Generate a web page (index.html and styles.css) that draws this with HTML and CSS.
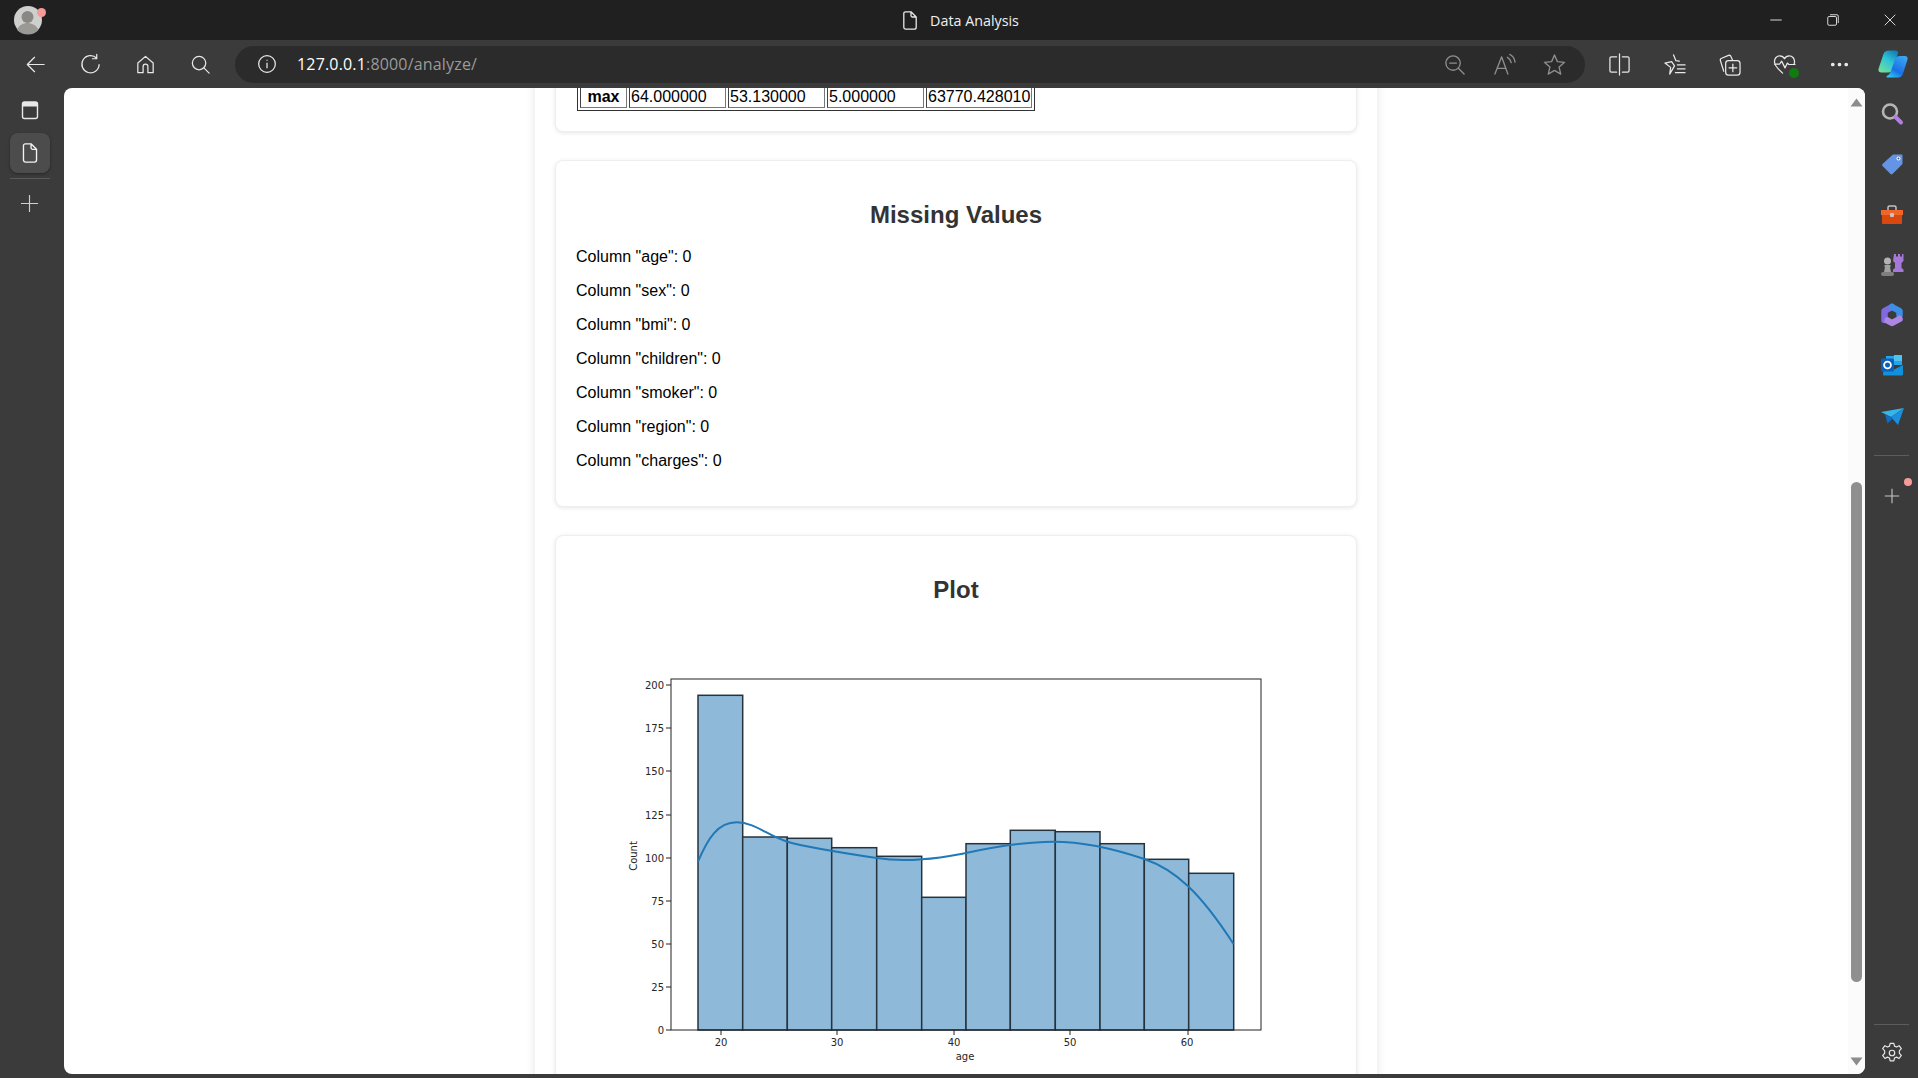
FILE: index.html
```html
<!DOCTYPE html>
<html>
<head>
	<title>Data Analysis</title>
	<link rel="stylesheet" href="styles.css">
</head>
<body>
<div class="app">

  <header class="titlebar">
    <div class="avatar-wrap">
      <svg class="avatar" viewBox="0 0 30 30">
        <circle cx="15" cy="15" r="14" fill="#cfcfcd"/>
        <circle cx="14.500" cy="12" r="6" fill="#8a8885"/>
        <path d="M4 25c2-5 6-7 10.500-7s8.500 2 11 7c-3 3-6.500 4.500-10.500 4.500S7 28 4 25z" fill="#9b9996"/>
      </svg>
      <span class="avatar-dot"></span>
    </div>
    <div class="window-title">
      <svg class="ico-doc" viewBox="0 0 14 19"><path d="M2.500 0.800h5.500L13.200 6v10.200a2 2 0 0 1-2 2H2.800a2 2 0 0 1-2-2V2.500a1.700 1.700 0 0 1 1.700-1.700z M8 0.800V4.500A1.500 1.500 0 0 0 9.500 6h3.700" fill="none" stroke="#e8e8e8" stroke-width="1.300" stroke-linejoin="round"/></svg>
      <span>Data Analysis</span>
    </div>
    <div class="window-controls">
      <div class="win-btn"><svg viewBox="0 0 16 16"><path d="M1.500 8h13" stroke="#f0f0f0" fill="none"/></svg></div>
      <div class="win-btn"><svg viewBox="0 0 16 16"><rect x="2" y="4" width="10" height="10" rx="1.500" fill="none" stroke="#f0f0f0"/><path d="M4.500 2h8a1.500 1.500 0 0 1 1.500 1.500v8" fill="none" stroke="#f0f0f0"/></svg></div>
      <div class="win-btn"><svg viewBox="0 0 16 16"><path d="M2 2l12 12M14 2L2 14" stroke="#f0f0f0" fill="none"/></svg></div>
    </div>
  </header>

  <nav class="toolbar">
    <div class="nav-btn"><svg viewBox="0 0 24 24"><path d="M21 12H3.500M11 4.500L3.500 12l7.500 7.500"/></svg></div>
    <div class="nav-btn"><svg viewBox="0 0 24 24"><path d="M18.500 5.500A9 9 0 1 0 21 12M18.500 1.500v4.500H14"/></svg></div>
    <div class="nav-btn"><svg viewBox="0 0 24 24"><path d="M4 10.500L12 3.500l8 7v10h-5.500v-6.500a2.500 2.500 0 0 0-5 0v6.500H4z"/></svg></div>
    <div class="nav-btn"><svg viewBox="0 0 24 24"><circle cx="10.500" cy="10.500" r="7"/><path d="M15.500 15.500L21 21"/></svg></div>

    <div class="address">
      <svg class="addr-info" viewBox="0 0 24 24"><circle cx="12" cy="12" r="10"/><path d="M12 10.500V17M12 7v1.200"/></svg>
      <div class="url"><span class="url-host">127.0.0.1</span>:8000/analyze/</div>
      <div class="addr-icons">
        <svg viewBox="0 0 24 24"><circle cx="10.500" cy="10.500" r="7.500"/><path d="M7 10.500h7M16 16l6 6"/></svg>
        <svg viewBox="0 0 24 24"><path d="M2 22L9 4l6.500 18M4.500 16h8.500M15 4.500c2 1 3.500 3 4 5.500M17.500 1.500c3 1.500 5 4.500 5.500 8"/></svg>
        <svg viewBox="0 0 24 24"><path d="M12 2l3 7 7.500.7-5.700 5 1.700 7.300-6.500-3.900L5.500 22l1.700-7.300-5.700-5L9 9z"/></svg>
      </div>
    </div>

    <div class="actions">
      <div class="nav-btn"><svg viewBox="0 0 24 24"><path d="M12 1v22M9 4H3.500A1.500 1.500 0 0 0 2 5.500v13A1.500 1.500 0 0 0 3.500 20H9M15 4h5.500A1.500 1.500 0 0 1 22 5.500v13a1.500 1.500 0 0 1-1.500 1.500H15"/></svg></div>
      <div class="nav-btn"><svg viewBox="0 0 24 24"><path d="M11 2l2.500 6 3.500.5M12 13.500L7 22l1-7L2 10.500l7-1.500zM15 12.500h8M15 16.500h8M13 20.500h10"/></svg></div>
      <div class="nav-btn"><svg viewBox="0 0 24 24"><path d="M6 19L2.500 8a2 2 0 0 1 1.300-2.500L11 2.500a2 2 0 0 1 2.500 1.200L15 7"/><rect x="8" y="8" width="15" height="15" rx="3"/><path d="M15.500 11.500v8M11.500 15.500h8"/></svg></div>
      <div class="nav-btn health">
        <svg viewBox="0 0 24 24"><path d="M5 16C2.500 13.500 1.500 11.500 1.500 9c0-3.500 2.500-6 5.500-6 2 0 4 1 5 3 1-2 3-3 5-3 3 0 5.500 2.500 5.500 6 0 1-.2 2-.7 3M1.500 11.500H7l2-3 3.500 7 2.500-5 1.500 1.500H23M5 16l5 5"/></svg>
        <span class="health-badge"></span>
      </div>
      <div class="nav-btn"><svg viewBox="0 0 24 24"><circle cx="5" cy="12" r="1.300" class="solid"/><circle cx="12" cy="12" r="1.300" class="solid"/><circle cx="19" cy="12" r="1.300" class="solid"/></svg></div>
      <div class="nav-btn copilot">
        <svg viewBox="0 0 30 28">
          <defs>
            <linearGradient id="cpA" x1="0.800" y1="0" x2="0.150" y2="1"><stop offset="0" stop-color="#0f7fb8"/><stop offset="0.450" stop-color="#2fc4d6"/><stop offset="1" stop-color="#74e09a"/></linearGradient>
            <linearGradient id="cpB" x1="0.800" y1="0" x2="0.200" y2="1"><stop offset="0" stop-color="#3ba6f2"/><stop offset="0.650" stop-color="#1a6fe6"/><stop offset="1" stop-color="#2cc6f0"/></linearGradient>
          </defs>
          <path d="M11 0.500h6c2.500 0 3.500 1 3 3L14 20c-.6 1.700-1.700 2.500-3.500 2.500H3.500C1 22.500 0 21 .6 18.500L5.500 4C6.300 1.700 8 .5 11 .5z" fill="url(#cpA)"/>
          <path d="M22 6h5c2 0 3 1.500 2.500 3.500L25 23.500c-.8 2.800-2.500 4-5 4H10c-1.800 0-2-1-.8-1.800 1.700-1 2.800-2.200 3.500-4.200L17 9.500C17.800 7 19.500 6 22 6z" fill="url(#cpB)"/>
        </svg>
      </div>
    </div>
  </nav>

  <div class="body">
    <aside class="leftbar">
      <svg class="left-ico" viewBox="0 0 20 20"><rect x="2.500" y="2" width="15" height="16.500" rx="2" fill="none" stroke="#e8e8e8" stroke-width="1.400"/><path d="M2.500 4a2 2 0 0 1 2-2h11a2 2 0 0 1 2 2v2.500h-15z" fill="#e8e8e8"/></svg>
      <div class="tab-tile">
        <svg class="left-ico" viewBox="0 0 14 19"><path d="M2.500 0.800h5.500L13.200 6v10.200a2 2 0 0 1-2 2H2.800a2 2 0 0 1-2-2V2.500a1.700 1.700 0 0 1 1.700-1.700z M8 0.800V4.500A1.500 1.500 0 0 0 9.500 6h3.700" fill="none" stroke="#f2f2f2" stroke-width="1.300" stroke-linejoin="round"/></svg>
      </div>
      <div class="left-rule"></div>
      <svg class="left-plus" viewBox="0 0 20 20"><path d="M10 1v18M1 10h18" stroke="#cfcfcf" stroke-width="1.200" fill="none"/></svg>
    </aside>

    <main class="viewport">
      <div class="page">
        <div class="container">

          <section class="card card-clipped">
            <table class="stats">
              <tr>
                <th>max</th>
                <td class="col-a">64.000000</td>
                <td class="col-a">53.130000</td>
                <td class="col-a">5.000000</td>
                <td>63770.428010</td>
              </tr>
            </table>
          </section>

          <section class="card">
            <h2>Missing Values</h2>
            <p>Column "age": 0</p>
            <p>Column "sex": 0</p>
            <p>Column "bmi": 0</p>
            <p>Column "children": 0</p>
            <p>Column "smoker": 0</p>
            <p>Column "region": 0</p>
            <p>Column "charges": 0</p>
          </section>

          <section class="card">
            <h2>Plot</h2>
            <svg class="plot" viewBox="576 624 760 456">
              <g class="bars">
                <rect x="698" y="695.300" width="44.700" height="334.700"/>
                <rect x="742.700" y="837" width="44.600" height="193"/>
                <rect x="787.300" y="838.300" width="44.400" height="191.700"/>
                <rect x="831.700" y="847.700" width="45" height="182.300"/>
                <rect x="876.700" y="856.300" width="45" height="173.700"/>
                <rect x="921.700" y="897.300" width="44.300" height="132.700"/>
                <rect x="966" y="843.700" width="44.300" height="186.300"/>
                <rect x="1010.300" y="830.300" width="45" height="199.700"/>
                <rect x="1055.300" y="831.700" width="44.700" height="198.300"/>
                <rect x="1100" y="843.700" width="44.300" height="186.300"/>
                <rect x="1144.300" y="859.300" width="44.400" height="170.700"/>
                <rect x="1188.700" y="873.300" width="45" height="156.700"/>
              </g>
              <path class="kde" d="M698 861.700C708 838 718 822.300 736.700 822.300C755 822.300 768 836 787.300 841.700C810 848 850 854 876.700 858C895 860.500 915 860.500 921.700 859.300C940 858 955 855 966 853C985 849 1020 841.700 1053.300 841.700C1085 841.700 1115 849 1144.300 859C1175 869.500 1200 892 1233.700 944.300"/>
              <rect class="axes" x="671" y="679" width="590" height="351"/>
              <g class="ticks">
                <path d="M666 1030h5M666 987h5M666 944h5M666 901h5M666 858h5M666 815h5M666 771h5M666 728h5M666 685h5"/>
                <path d="M721 1030v5M837 1030v5M954 1030v5M1070 1030v5M1188 1030v5"/>
              </g>
              <g class="tick-y">
                <text x="664" y="1034">0</text>
                <text x="664" y="991">25</text>
                <text x="664" y="948">50</text>
                <text x="664" y="905">75</text>
                <text x="664" y="862">100</text>
                <text x="664" y="819">125</text>
                <text x="664" y="775">150</text>
                <text x="664" y="732">175</text>
                <text x="664" y="689">200</text>
              </g>
              <g class="tick-x">
                <text x="721" y="1046">20</text>
                <text x="837" y="1046">30</text>
                <text x="954" y="1046">40</text>
                <text x="1070" y="1046">50</text>
                <text x="1187" y="1046">60</text>
              </g>
              <text class="axis-label" x="965" y="1060">age</text>
              <text class="axis-label" transform="translate(637 856) rotate(-90)">Count</text>
            </svg>
          </section>

        </div>
      </div>

      <div class="scrollbar">
        <svg class="sb-arrow" viewBox="0 0 12 9"><path d="M6 0.500L12 8.500H0z" fill="#8c8c8c"/></svg>
        <div class="sb-track"><div class="sb-thumb"></div></div>
        <svg class="sb-arrow" viewBox="0 0 12 9"><path d="M6 8.500L12 0.500H0z" fill="#8c8c8c"/></svg>
      </div>
    </main>

    <aside class="rightbar">
      <div class="right-apps">
        <svg viewBox="0 0 24 24"><circle cx="10" cy="9.500" r="7" fill="none" stroke="#b5b5b5" stroke-width="2.600"/><path d="M15.500 15L21 20.500" stroke="#b07fe0" stroke-width="4" stroke-linecap="round"/></svg>
        <svg viewBox="0 0 24 24"><path d="M13 2.500h8.500a1 1 0 0 1 1 1V12L12.500 22a1.500 1.500 0 0 1-2 0l-8-8a1.500 1.500 0 0 1 0-2z" fill="#6394e6"/><circle cx="18.500" cy="6.500" r="2" fill="#fff"/><circle cx="18.500" cy="6.500" r="1" fill="#44506a"/></svg>
        <svg viewBox="0 0 24 24"><path d="M8 7V4.500A1.500 1.500 0 0 1 9.500 3h5A1.500 1.500 0 0 1 16 4.500V7" fill="none" stroke="#c4c4c4" stroke-width="1.500"/><path d="M1 7h22v5H1z" fill="#f0652a"/><path d="M2 12h20v8a1 1 0 0 1-1 1H3a1 1 0 0 1-1-1z" fill="#d9480f"/><rect x="10" y="10" width="4" height="4" rx="1" fill="#c9c4c0"/></svg>
        <svg viewBox="0 0 24 24"><path d="M14 1h2v2.500h2V1h2v2.500h2V1h1.500v7l-2 2v5l2 1.500V19H13v-2.500l2-1.500v-5l-2-2z" fill="#a678d8"/><circle cx="7.500" cy="8" r="3.500" fill="#b3b3b3"/><path d="M5 12h5l1 1-1 1 1 5H4l1-5-1-1z" fill="#a0a0a0"/><rect x="1" y="19" width="13" height="4" rx="2" fill="#7f7f7f"/></svg>
        <svg class="m365" viewBox="0 0 24 24">
          <path d="M4.500 17V8L12 4" stroke="#7f6ae0"/>
          <path d="M12 4l7.500 4v4" stroke="#3d8fe6"/>
          <path d="M19.500 16l-7.500 4-4.500-2.500" stroke="#ad86e4"/>
        </svg>
        <svg viewBox="0 0 24 24"><rect x="6" y="3" width="16" height="9" fill="#27a4e8"/><rect x="14" y="2" width="8" height="6" fill="#4fc3f0"/><path d="M4 12l9 5 10-5v9a1.500 1.500 0 0 1-1.500 1.500h-18A1.500 1.500 0 0 1 3 21z" fill="#1290dc"/><rect x="1" y="5.500" width="13" height="13" rx="1.500" fill="#0a60bd"/><circle cx="7.500" cy="12" r="3.400" fill="none" stroke="#fff" stroke-width="1.800"/></svg>
        <svg viewBox="0 0 24 24"><path d="M1 8l23-4-13 9z" fill="#35b5ee"/><path d="M24 4l-6 17-7-8z" fill="#1a8fdc"/><path d="M5 10.500l6 2.500 1.500 2-5 4.500z" fill="#0f6cc0"/></svg>
      </div>
      <div class="right-rule"></div>
      <div class="right-add">
        <svg viewBox="0 0 20 20"><path d="M10 2v16M2 10h16" stroke="#c8c8c8" stroke-width="1.200" fill="none"/></svg>
        <span class="add-dot"></span>
      </div>
      <div class="right-spacer"></div>
      <div class="right-rule"></div>
      <svg class="gear" viewBox="0 0 24 24"><path d="M10 1.500h4l.7 3 2.300 1 2.700-1.500 2.500 3.300-2.200 2.300v2.800l2.200 2.300-2.500 3.300-2.700-1.500-2.300 1-.7 3h-4l-.7-3-2.300-1-2.700 1.500-2.500-3.300 2.200-2.300V9.600L1.800 7.300l2.500-3.300L7 5.500l2.300-1z" fill="none" stroke="#e6e6e6" stroke-width="1.300" stroke-linejoin="round"/><circle cx="12" cy="12" r="3" fill="none" stroke="#e6e6e6" stroke-width="1.300"/></svg>
    </aside>
  </div>
</div>
</body>
</html>
```

FILE: styles.css
```css
* {
  box-sizing: border-box;
}

html, body {
  margin: 0;
  height: 100%;
  overflow: hidden;
}

.app {
  display: flex;
  flex-direction: column;
  height: 100vh;
  background: #3b3b3b;
}

/* title bar */
.titlebar {
  display: grid;
  grid-template-columns: 1fr auto 1fr;
  align-items: center;
  height: 40px;
  background: #202020;
}

.avatar-wrap {
  position: relative;
  width: 30px;
  height: 30px;
  margin-left: 13px;
}

.avatar {
  display: block;
  width: 30px;
  height: 30px;
}

.avatar-dot {
  position: absolute;
  top: 3px;
  right: -3px;
  width: 9px;
  height: 9px;
  border-radius: 50%;
  background: #f79a9a;
}

.window-title {
  display: flex;
  align-items: center;
  gap: 13px;
  margin-left: 4px;
  color: #f0f0f0;
  font: 14.300px "Open Sans", sans-serif;
}

.ico-doc {
  width: 14px;
  height: 19px;
}

.window-controls {
  display: flex;
  justify-content: flex-end;
}

.win-btn {
  display: flex;
  align-items: center;
  justify-content: center;
  width: 57px;
  height: 40px;
}

.win-btn svg {
  width: 14px;
  height: 14px;
}

/* toolbar */
.toolbar {
  display: flex;
  align-items: center;
  height: 48px;
  padding-left: 8px;
  background: #3b3b3b;
}

.nav-btn {
  position: relative;
  display: flex;
  flex: none;
  align-items: center;
  justify-content: center;
  width: 55px;
  height: 48px;
}

.nav-btn svg {
  width: 23px;
  height: 23px;
  fill: none;
  stroke: #e8e8e8;
  stroke-width: 1.300;
  stroke-linejoin: round;
  stroke-linecap: round;
}

.nav-btn svg .solid {
  fill: #e8e8e8;
}

.address {
  display: flex;
  flex: 1;
  align-items: center;
  gap: 20px;
  height: 37px;
  margin: 0 7px;
  padding: 0 19px 0 22px;
  border-radius: 19px;
  background: #2b2b2b;
}

.addr-info {
  flex: none;
  width: 20px;
  height: 20px;
  fill: none;
  stroke: #e8e8e8;
  stroke-width: 1.500;
}

.url {
  flex: 1;
  color: #9a9a9a;
  font: 16px "Open Sans", sans-serif;
  letter-spacing: 0.170px;
}

.url-host {
  color: #fff;
}

.addr-icons {
  display: flex;
  gap: 27px;
}

.addr-icons svg {
  width: 23px;
  height: 23px;
  fill: none;
  stroke: #8e8e8e;
  stroke-width: 1.400;
  stroke-linejoin: round;
  stroke-linecap: round;
}

.actions {
  display: flex;
  flex: none;
}

.health-badge {
  position: absolute;
  top: 28px;
  left: 32px;
  width: 10px;
  height: 10px;
  border-radius: 50%;
  background: #107c10;
}

.copilot {
  width: 51px;
}

.nav-btn.copilot svg {
  width: 30px;
  height: 28px;
  stroke: none;
}

/* main row */
.body {
  display: flex;
  flex: 1;
  min-height: 0;
}

.leftbar {
  display: flex;
  flex: none;
  flex-direction: column;
  align-items: center;
  width: 64px;
  padding: 12px 5px 0 0;
}

.left-ico {
  flex: none;
  width: 20px;
  height: 20px;
}

.tab-tile {
  display: flex;
  align-items: center;
  justify-content: center;
  width: 40px;
  height: 40px;
  margin-top: 13px;
  border-radius: 8px;
  background: #4c4c4c;
  box-shadow: 0 1px 3px rgba(0, 0, 0, 0.350);
}

.left-rule {
  width: 40px;
  height: 1px;
  margin-top: 5px;
  background: #5a5a5a;
}

.left-plus {
  width: 19px;
  height: 19px;
  margin-top: 15px;
}

.viewport {
  display: flex;
  flex: 1;
  min-width: 0;
  margin-bottom: 4px;
  overflow: hidden;
  border-radius: 8px;
  background: #fff;
}

.page {
  flex: 1;
  min-width: 0;
  overflow: hidden;
}

.container {
  width: 842px;
  min-height: 100%;
  margin: 0 auto;
  padding: 0 20px;
  background: #fff;
  box-shadow: 0 0 10px rgba(0, 0, 0, 0.100);
  font: 16px "Liberation Sans", Arial, sans-serif;
  color: #000;
}

.card {
  margin-bottom: 28px;
  padding: 20px;
  border: 1px solid #eeeeee;
  border-radius: 8px;
  background: #fff;
  box-shadow: 0 1px 4px rgba(0, 0, 0, 0.100);
}

.card-clipped {
  margin-top: -26px;
}

.card h2 {
  margin: 20px 0;
  color: #333;
  font-size: 24px;
  line-height: 27px;
  text-align: center;
}

.card p {
  margin: 16px 0;
  line-height: 18px;
}

/* table */
.stats {
  margin-left: 1px;
  border: 1px solid #333;
  border-spacing: 2px;
}

.stats th,
.stats td {
  height: 22px;
  padding: 1px;
  border: 1px solid #777;
  border-top-color: #444;
  border-left-color: #444;
  line-height: 18px;
  text-align: left;
}

.stats th {
  width: 47px;
  text-align: center;
}

.stats .col-a {
  width: 97px;
}

/* plot */
.plot {
  display: block;
  width: 760px;
  height: 456px;
  margin-top: 21px;
  font-family: "DejaVu Sans", sans-serif;
  font-size: 10px;
}

.bars rect {
  fill: #8eb9d9;
  stroke: #26333d;
  stroke-width: 1.500;
}

.kde {
  fill: none;
  stroke: #2178b6;
  stroke-width: 2;
}

.axes {
  fill: none;
  stroke: #222;
  stroke-width: 1;
}

.ticks path {
  fill: none;
  stroke: #222;
  stroke-width: 1;
}

.tick-y text {
  fill: #262626;
  text-anchor: end;
}

.tick-x text,
.axis-label {
  fill: #262626;
  text-anchor: middle;
}

/* page scrollbar */
.scrollbar {
  display: flex;
  flex: none;
  flex-direction: column;
  align-items: center;
  width: 17px;
  padding: 10px 0 8px;
  background: #fbfbfb;
}

.sb-arrow {
  flex: none;
  width: 13px;
  height: 9px;
}

.sb-track {
  flex: 1;
  width: 100%;
}

.sb-thumb {
  width: 11px;
  height: 500px;
  margin: 375px auto 0;
  border-radius: 6px;
  background: #8f8f8f;
}

/* right rail */
.rightbar {
  display: flex;
  flex: none;
  flex-direction: column;
  align-items: center;
  width: 53px;
  padding: 14px 0;
}

.right-apps {
  display: flex;
  flex-direction: column;
  gap: 26.300px;
  margin-bottom: 27px;
}

.right-apps svg {
  display: block;
  width: 24px;
  height: 24px;
}

.right-apps .m365 path {
  fill: none;
  stroke-width: 6.500;
  stroke-linecap: round;
  stroke-linejoin: round;
}

.right-rule {
  flex: none;
  width: 35px;
  height: 1px;
  background: #5c5c5c;
}

.right-add {
  position: relative;
  width: 18px;
  height: 18px;
  margin-top: 31px;
}

.right-add svg {
  display: block;
  width: 18px;
  height: 18px;
}

.add-dot {
  position: absolute;
  top: -9px;
  right: -11px;
  width: 8px;
  height: 8px;
  border-radius: 50%;
  background: #f79a9a;
}

.right-spacer {
  flex: 1;
}

.gear {
  flex: none;
  width: 22px;
  height: 22px;
  margin-top: 17px;
}
```
